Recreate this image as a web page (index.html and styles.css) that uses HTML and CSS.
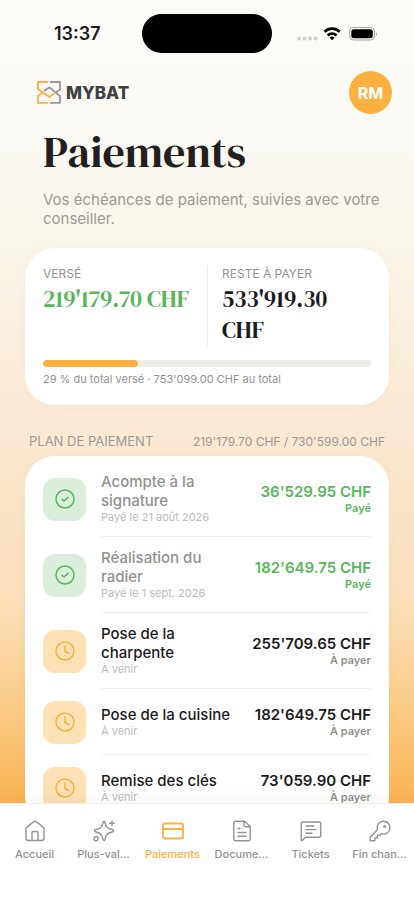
FILE: index.html
```html
<!DOCTYPE html>
<html lang="fr">
<head>
<meta charset="utf-8">
<meta name="viewport" content="width=device-width, initial-scale=1">
<title>Paiements</title>
<link rel="stylesheet" href="styles.css">
</head>
<body>
<svg class="sprite" aria-hidden="true">
  <symbol id="check" viewBox="0 0 20 20"><circle cx="10" cy="10" r="9"/><path d="M7 10.2l2 1.800 4-3.600"/></symbol>
  <symbol id="clock" viewBox="0 0 20 20"><circle cx="10" cy="10" r="9"/><path d="M10 5v5.500l4 2"/></symbol>
</svg>
<div class="app">
  <div class="status">
    <span class="time">13:37</span>
    <span class="island"></span>
    <svg class="signals" viewBox="0 0 82 16" aria-hidden="true">
      <g fill="#cfcfcc"><circle cx="3" cy="12.500" r="2"/><circle cx="8.500" cy="12.500" r="2"/><circle cx="14" cy="12.500" r="2"/><circle cx="19.500" cy="12.500" r="2"/></g>
      <g fill="none" stroke="#000" stroke-width="2.700"><path d="M28.500 5.700a11 11 0 0 1 15.200 0"/><path d="M31.700 9.400a6.400 6.400 0 0 1 8.800 0"/></g>
      <path d="M36.100 14.200l-2.500-2.500a3.600 3.600 0 0 1 5 0z"/>
      <rect x="53.500" y="1.500" width="25" height="12.500" rx="4" fill="none" stroke="#a5a5a2"/>
      <rect x="55.300" y="3.200" width="21.500" height="9" rx="2.500"/>
      <path d="M80 6q2 2 0 4z" fill="#a5a5a2"/>
    </svg>
  </div>
  <main>
    <header class="top">
      <a class="brand" href="#">
        <svg viewBox="0 0 24 23" aria-hidden="true">
          <g fill="none" stroke-width="1.800">
            <path stroke="#fbb040" d="M11.300 1H1v7l11.400 8 5-3.700M11.300 21.800H1V15l4.800-3.400"/>
            <path stroke="#98989a" d="M13 1h10v7.500l-4.500 3.200M13 21.800h10V15L12.300 6.400 7 10"/>
          </g>
        </svg>
        <span>MYBAT</span>
      </a>
      <button class="avatar" type="button">RM</button>
    </header>
    <div class="intro">
      <h1>Paiements</h1>
      <p>Vos échéances de paiement, suivies avec votre conseiller.</p>
    </div>
    <section class="card summary">
      <div class="totals">
        <div class="total"><span class="label">VERSÉ</span><strong class="sum paid">219'179.70 CHF</strong></div>
        <div class="total"><span class="label">RESTE À PAYER</span><strong class="sum">533'919.30 CHF</strong></div>
      </div>
      <div class="bar"><div class="fill" style="width:29%"></div></div>
      <p class="caption">29 % du total versé · 753'099.00 CHF au total</p>
    </section>
    <div class="section-head"><h2>PLAN DE PAIEMENT</h2><span>219'179.70 CHF / 730'599.00 CHF</span></div>
    <ul class="card plan">
      <li class="done"><span class="tile"><svg><use href="#check"/></svg></span>
        <div class="row"><div class="what"><b>Acompte à la signature</b><small>Payé le 21 août 2026</small></div><div class="amount"><b>36'529.95 CHF</b><small>Payé</small></div></div></li>
      <li class="done"><span class="tile"><svg><use href="#check"/></svg></span>
        <div class="row"><div class="what"><b>Réalisation du radier</b><small>Payé le 1 sept. 2026</small></div><div class="amount"><b>182'649.75 CHF</b><small>Payé</small></div></div></li>
      <li><span class="tile"><svg><use href="#clock"/></svg></span>
        <div class="row"><div class="what"><b>Pose de la charpente</b><small>À venir</small></div><div class="amount"><b>255'709.65 CHF</b><small>À payer</small></div></div></li>
      <li><span class="tile"><svg><use href="#clock"/></svg></span>
        <div class="row"><div class="what"><b>Pose de la cuisine</b><small>À venir</small></div><div class="amount"><b>182'649.75 CHF</b><small>À payer</small></div></div></li>
      <li><span class="tile"><svg><use href="#clock"/></svg></span>
        <div class="row"><div class="what"><b>Remise des clés</b><small>À venir</small></div><div class="amount"><b>73'059.90 CHF</b><small>À payer</small></div></div></li>
    </ul>
  </main>
  <nav>
    <a href="#"><svg viewBox="0 0 22 22"><path d="M2 9.500c0-1.200.4-1.900 1.300-2.600l6-4.900c1.100-.9 2.300-.9 3.400 0l6 4.900c.9.700 1.300 1.400 1.300 2.600V18c0 1.600-.9 2.500-2.500 2.500h-13C2.900 20.500 2 19.600 2 18zM8 20.500V12.500c0-.6.300-1 1-1h4c.7 0 1 .4 1 1v8"/></svg><span>Accueil</span></a>
    <a href="#"><svg viewBox="0 0 22 22"><path d="M11 1.500c.5 0 .8.300.9.800.8 4.600 2.700 6.500 7.800 7.500 1.100.2 1.100 1.700 0 1.900-5.100 1-7 2.900-7.800 7.900-.2 1.200-1.600 1.200-1.800 0-.8-5-2.700-6.900-7.800-7.900-1.100-.2-1.100-1.700 0-1.900 5.100-1 7-2.900 7.800-7.500.1-.5.400-.8.900-.8zM19 1v4.500M16.700 3.200h4.600"/><circle cx="3" cy="18.800" r="2"/></svg><span>Plus-val…</span></a>
    <a class="active" href="#" aria-current="page"><svg viewBox="0 0 22 22"><rect x="1" y="3.500" width="20" height="15" rx="2"/><path d="M1 9h20"/></svg><span>Paiements</span></a>
    <a href="#"><svg viewBox="0 0 22 22"><path d="M13.500 1.200H4.500c-1 0-1.700.7-1.700 1.700v16.200c0 1 .7 1.700 1.700 1.700h13c1 0 1.700-.7 1.700-1.700V6.500zM13 1.200V5c0 1 .7 1.700 1.700 1.700h4.500M7 8.500h2M7 12.500h8M7 16.300h8"/></svg><span>Docume…</span></a>
    <a href="#"><svg viewBox="0 0 22 22"><path d="M1.200 20V4c0-1.300.7-2 2-2h15.600c1.300 0 2 .7 2 2v11.200c0 1.300-.7 2-2 2H5.500l-3 2.900c-.7.600-1.300.5-1.300-.1zM6 6h8M6 9.600h10M6 13.200h6"/></svg><span>Tickets</span></a>
    <a href="#"><svg viewBox="0 0 22 22"><path d="M8.500 9.700A6.400 6.400 0 1 1 12.500 13.700L10.700 15.300H8.300V17.800L6 18.200V20.300L5 20.800H1.200V17.300z"/><circle cx="15.500" cy="6.500" r=".8"/></svg><span>Fin chan…</span></a>
  </nav>
</div>
</body>
</html>
```
FILE: styles.css
```css
* { box-sizing: border-box; margin: 0; padding: 0; }
body { font-family: Inter, "Liberation Sans", sans-serif; color: #1c1a1c; }
a { color: inherit; text-decoration: none; }
.sprite { display: none; }
.app {
  height: 100vh;
  display: flex;
  flex-direction: column;
  background: linear-gradient(#fbfcf8 0, #fbf9f4 15%, #faf5e9 28%, #fae9d4 48%, #fadfb8 67%, #fbca85 79%, #fbb454 89%);
}
.status {
  display: grid;
  grid-template-columns: 1fr 130px 1fr;
  align-items: center;
  padding: 14px 0 18px;
}
.time { padding-left: 54px; font-size: 18px; font-weight: 600; line-height: 20px; }
.island { height: 39px; border-radius: 20px; background: #000; }
.signals { width: 82px; height: 16px; margin-left: 24px; }

main { flex: 1; min-height: 0; overflow: auto; scrollbar-width: none; padding: 0 25px; }
.top { display: flex; align-items: center; justify-content: space-between; padding-left: 12px; margin-right: -3px; }
.brand { display: flex; align-items: center; gap: 5px; font-size: 17px; font-weight: 800; color: #414042; }
.brand svg { width: 24px; height: 23px; }
.avatar { width: 43px; height: 43px; border: 0; border-radius: 50%; background: #fbb040; color: #fff; font: 700 16px Inter, sans-serif; }
.intro { padding: 14px 0 20px 18px; }
h1 { font: 400 44px/48px "DM Serif Display", "Liberation Serif", serif; color: #231f20; }
.intro p { margin-top: 14px; font-size: 15px; line-height: 19px; color: #9b9b99; }

.card { background: #fff; border-radius: 30px; box-shadow: 0 2px 12px rgba(200, 140, 50, .06); }
.summary { padding: 18px; }
.totals { display: grid; grid-template-columns: 1fr 1fr; }
.total { display: flex; flex-direction: column; gap: 3px; }
.total + .total { border-left: 1px solid #eeeee8; padding: 0 14px; }
.label { font-size: 12px; line-height: 15px; color: #92928e; }
.sum { font: 400 23px/31px "DM Serif Display", "Liberation Serif", serif; }
.paid { color: #57b65b; }
.bar { height: 7px; margin: 14px 0 5px; border-radius: 4px; background: #eeeee9; overflow: hidden; }
.fill { height: 100%; border-radius: 4px; background: #fbb040; }
.caption { font-size: 11px; line-height: 15px; color: #92928e; }

.section-head { display: flex; justify-content: space-between; padding: 28px 4px 6px; font-size: 12px; line-height: 17px; color: #99999a; }
h2 { font-size: 13px; font-weight: 400; }
.plan { list-style: none; padding: 5px 18px; }
.plan li { display: flex; align-items: center; gap: 15px; }
.tile { display: flex; align-items: center; justify-content: center; width: 43px; height: 43px; border-radius: 12px; background: #fce2b5; color: #fbb040; }
.tile svg { width: 20px; height: 20px; fill: none; stroke: currentColor; stroke-width: 1.5; stroke-linecap: round; stroke-linejoin: round; }
.row { flex: 1; min-height: 66px; display: flex; align-items: center; gap: 12px; padding: 11px 0; border-bottom: 1px solid #eeeee8; }
.plan li:last-child .row { border-color: transparent; }
.what { flex: 1; }
.row b, .row small { display: block; }
.row b { font-size: 15px; line-height: 19px; font-weight: 500; }
.row small { font-size: 11px; line-height: 15px; color: #bcbcb9; }
.amount { text-align: right; white-space: nowrap; }
.row .amount b { font-weight: 600; }
.row .amount small { font-weight: 600; color: #92928e; }
.done .tile { background: #dbeedb; color: #57b65b; }
.done .what b { color: #92928e; }
.done .amount b, .done .amount small { color: #57b65b; }

nav {
  display: grid;
  grid-template-columns: repeat(6, 1fr);
  position: relative;
  padding: 16px 0 38px;
  border-top: 1px solid #f0efea;
  background: #fff;
  box-shadow: 0 -4px 16px rgba(120, 110, 80, .06);
}
nav a { display: flex; flex-direction: column; align-items: center; gap: 5px; font-size: 11px; line-height: 15px; font-weight: 500; color: #92928e; white-space: nowrap; }
nav svg { width: 22px; height: 22px; fill: none; stroke: currentColor; stroke-width: 1.4; stroke-linecap: round; stroke-linejoin: round; }
nav .active { color: #fbb040; }
nav .active svg { stroke-width: 1.8; }
```
